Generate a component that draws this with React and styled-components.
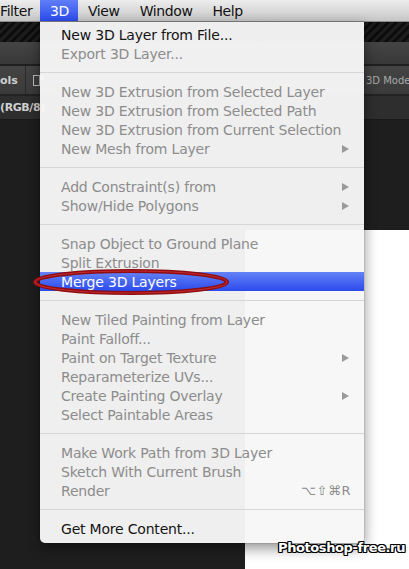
import React from "react";
import styled, { createGlobalStyle, css } from "styled-components";

const GlobalStyle = createGlobalStyle`
  html, body { margin: 0; padding: 0; background: #1d1d1d; }
  body { width: 409px; height: 569px; overflow: hidden; }
`;

const Screen = styled.div`
  position: relative;
  width: 409px;
  height: 569px;
  overflow: hidden;
  font-family: "DejaVu Sans", "Liberation Sans", sans-serif;
  display: flex;
  flex-direction: column;
  background: #1d1d1d;
`;

const MenuBar = styled.div`
  height: 22px;
  flex: none;
  display: flex;
  align-items: stretch;
  background: linear-gradient(#ededed, #dadada 50%, #c6c6c6);
  border-bottom: 1px solid #8a8a8a;
  box-sizing: border-box;
`;

const MenuTitle = styled.div`
  display: flex;
  align-items: center;
  width: ${(p) => (p.$width ? `${p.$width}px` : "auto")};
  box-sizing: border-box;
  padding: 0 10px;
  font-size: 14px;
  color: ${(p) => (p.$active ? "#fff" : "#111")};
  letter-spacing: -0.4px;
  ${(p) =>
    p.$first &&
    css`
      padding: 0;
    `}
  ${(p) =>
    p.$active &&
    css`
      background: linear-gradient(#5f7ef7, #2c4cee);
    `}
`;

const Workspace = styled.div`
  flex: 1;
  display: flex;
  flex-direction: column;
`;

const CarbonStrip = styled.div`
  height: 20px;
  flex: none;
  background-color: #121212;
  background-image: repeating-linear-gradient(
    135deg,
    #1c1c1c 0px,
    #1c1c1c 3px,
    #0c0c0c 3px,
    #0c0c0c 6px
  );
`;

const ToolBar = styled.div`
  height: 22px;
  flex: none;
  background: linear-gradient(#454545, #383838);
  border-bottom: 2px solid #1f1f1f;
`;

const OptionsBar = styled.div`
  height: 30px;
  flex: none;
  display: flex;
  align-items: center;
  background: linear-gradient(#444, #3a3a3a);
  border-bottom: 2px solid #222;
  box-sizing: border-box;
`;

const OptionsLabel = styled.span`
  font-size: 11px;
  font-weight: bold;
  color: #cfcfcf;
  padding-right: 7px;
  border-right: 1px solid #2a2a2a;
  height: 28px;
  display: flex;
  align-items: center;
`;

const ToolIcon = styled.span`
  margin-left: 7px;
  width: 5px;
  height: 9px;
  border: 1px solid #bdbdbd;
  position: relative;
  &::after {
    content: "";
    position: absolute;
    left: 6px;
    top: -1px;
    width: 4px;
    height: 5px;
    background: #bdbdbd;
  }
`;

const Spacer = styled.div`
  flex: 1;
`;

const ModeLabel = styled.span`
  font-size: 10px;
  color: #a9a9a9;
  width: 43px;
  height: 28px;
  display: flex;
  align-items: center;
  padding-left: 5px;
  border-left: 1px solid #2a2a2a;
  white-space: nowrap;
  overflow: hidden;
`;

const TabBar = styled.div`
  height: 23px;
  flex: none;
  display: flex;
  align-items: center;
  background: #2e2e2e;
  border-bottom: 1px solid #1a1a1a;
`;

const TabLabel = styled.span`
  font-size: 11px;
  font-weight: bold;
  letter-spacing: -0.4px;
  color: #d0d0d0;
`;

const CanvasArea = styled.div`
  flex: 1;
  display: grid;
  grid-template-columns: 245px 1fr;
  grid-template-rows: 110px 1fr;
`;

const Pasteboard = styled.div`
  background: #1e1e1e;
  grid-column: ${(p) => (p.$full ? "1 / 3" : "auto")};
`;

const Document = styled.div`
  background: #ffffff;
`;

const Dropdown = styled.div`
  position: absolute;
  left: 40px;
  top: 22px;
  width: 324px;
  padding: 3px 0 5px;
  background: rgba(247, 247, 247, 0.965);
  border-radius: 0 0 5px 5px;
  box-shadow: 0 5px 14px rgba(0, 0, 0, 0.45), 0 0 0 1px rgba(0, 0, 0, 0.08);
  z-index: 2;
`;

const Item = styled.div`
  position: relative;
  height: 19px;
  display: flex;
  align-items: center;
  padding: 0 13px 0 21px;
  font-size: 14px;
  letter-spacing: -0.2px;
  white-space: nowrap;
  color: ${(p) => (p.$enabled ? "#141414" : "#8c8c8c")};
  ${(p) =>
    p.$selected &&
    css`
      color: #ffffff;
      background: linear-gradient(#6382f7, #2b4bec);
    `}
`;

const Label = styled.span`
  flex: 1;
`;

const Arrow = styled.span`
  width: 0;
  height: 0;
  border-top: 4.5px solid transparent;
  border-bottom: 4.5px solid transparent;
  border-left: 7px solid #9a9a9a;
  margin-right: 2px;
`;

const Shortcut = styled.span`
  font-size: 13px;
  color: #8c8c8c;
  letter-spacing: 0.5px;
`;

const Separator = styled.div`
  height: 19px;
  display: flex;
  align-items: center;
  &::before {
    content: "";
    flex: 1;
    height: 1px;
    background: #d6d6d6;
  }
`;

const Ring = styled.svg`
  position: absolute;
  left: -10px;
  top: -6px;
  overflow: visible;
  pointer-events: none;
`;

const Watermark = styled.div`
  position: absolute;
  right: 4px;
  bottom: 14px;
  font-family: "DejaVu Sans", sans-serif;
  font-weight: bold;
  font-size: 13px;
  letter-spacing: -0.4px;
  color: #fff;
  text-shadow: -1px -1px 0 #000, 1px -1px 0 #000, -1px 1px 0 #000, 1px 1px 0 #000,
    0 1px 0 #000, 0 -1px 0 #000, 1px 0 0 #000, -1px 0 0 #000;
  z-index: 3;
`;

const groups = [
  [
    { t: "New 3D Layer from File...", enabled: true },
    { t: "Export 3D Layer..." },
  ],
  [
    { t: "New 3D Extrusion from Selected Layer" },
    { t: "New 3D Extrusion from Selected Path" },
    { t: "New 3D Extrusion from Current Selection" },
    { t: "New Mesh from Layer", sub: true },
  ],
  [
    { t: "Add Constraint(s) from", sub: true },
    { t: "Show/Hide Polygons", sub: true },
  ],
  [
    { t: "Snap Object to Ground Plane" },
    { t: "Split Extrusion" },
    { t: "Merge 3D Layers", selected: true },
  ],
  [
    { t: "New Tiled Painting from Layer" },
    { t: "Paint Falloff..." },
    { t: "Paint on Target Texture", sub: true },
    { t: "Reparameterize UVs..." },
    { t: "Create Painting Overlay", sub: true },
    { t: "Select Paintable Areas" },
  ],
  [
    { t: "Make Work Path from 3D Layer" },
    { t: "Sketch With Current Brush" },
    { t: "Render", shortcut: "⌥⇧⌘R" },
  ],
  [{ t: "Get More Content...", enabled: true }],
];

export default function App() {
  return (
    <Screen>
      <GlobalStyle />
      <MenuBar>
        <MenuTitle $first $width={40}>
          Filter
        </MenuTitle>
        <MenuTitle $active $width={38}>
          3D
        </MenuTitle>
        <MenuTitle>View</MenuTitle>
        <MenuTitle>Window</MenuTitle>
        <MenuTitle>Help</MenuTitle>
      </MenuBar>
      <Workspace>
        <CarbonStrip />
        <ToolBar />
        <OptionsBar>
          <OptionsLabel>ols</OptionsLabel>
          <ToolIcon />
          <Spacer />
          <ModeLabel>3D Mode</ModeLabel>
        </OptionsBar>
        <TabBar>
          <TabLabel>(RGB/8)</TabLabel>
        </TabBar>
        <CanvasArea>
          <Pasteboard $full />
          <Pasteboard />
          <Document />
        </CanvasArea>
      </Workspace>

      <Dropdown>
        {groups.map((g, gi) => (
          <React.Fragment key={gi}>
            {gi > 0 && <Separator />}
            {g.map((it) => (
              <Item key={it.t} $enabled={it.enabled} $selected={it.selected}>
                <Label>{it.t}</Label>
                {it.sub && <Arrow />}
                {it.shortcut && <Shortcut>{it.shortcut}</Shortcut>}
                {it.selected && (
                  <Ring width="200" height="30" viewBox="0 0 200 30">
                    <ellipse
                      cx="101"
                      cy="16"
                      rx="96"
                      ry="11"
                      fill="none"
                      stroke="#8e0d12"
                      strokeWidth="4"
                    />
                    <ellipse
                      cx="101"
                      cy="16"
                      rx="96"
                      ry="11"
                      fill="none"
                      stroke="#c42a2a"
                      strokeWidth="1.2"
                    />
                  </Ring>
                )}
              </Item>
            ))}
          </React.Fragment>
        ))}
      </Dropdown>
      <Watermark>Photoshop-free.ru</Watermark>
    </Screen>
  );
}
